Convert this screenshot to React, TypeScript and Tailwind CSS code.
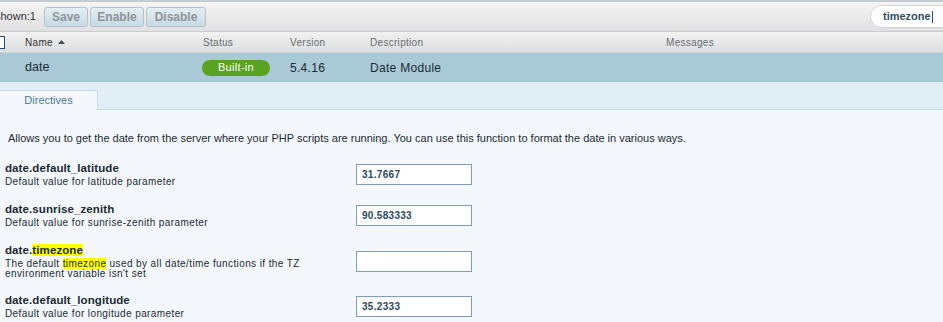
import React from "react";

const font = { fontFamily: '"Liberation Sans", Arial, sans-serif' };

function Directive({
  name,
  desc,
  value,
}: {
  name: React.ReactNode;
  desc: React.ReactNode;
  value: string;
}) {
  return (
    <div className="flex items-center mb-[14px]">
      <div className="w-[356px] shrink-0 pl-[5px]">
        <div className="text-[11.5px] leading-[17px] font-bold text-[#1b2a33] tracking-[0.1px]">{name}</div>
        <div className="text-[10px] leading-[10px] text-[#1b2a33] tracking-[0.4px] w-[330px]">{desc}</div>
      </div>
      <div className="w-[116px] h-[21px] mt-[1px] border border-[#7f9db9] bg-white px-[5px] flex items-center text-[10px] font-bold text-[#2c4a5c] tracking-[0.3px]">
        {value}
      </div>
    </div>
  );
}

const hl = (t: string) => <span className="bg-[#ffff00]">{t}</span>;

export default function App() {
  return (
    <div className="w-[943px] h-[322px] overflow-hidden bg-[#f4f8fc]" style={font}>
      <div className="h-[2px] bg-[#c5ccd1]" />
      {/* toolbar */}
      <div className="h-[30px] bg-gradient-to-b from-[#f5f5f5] to-[#e0e0e0] border-b border-[#c8ced3] flex items-center">
        <span className="text-[11px] text-[#333] ml-[-5px] w-[49px]">shown:1</span>
        <div className="flex gap-[2px]">
          {["Save", "Enable", "Disable"].map((b, i) => (
            <div
              key={b}
              className={`h-[20px] ${i === 0 ? "w-[44px]" : i === 1 ? "w-[54px]" : "w-[60px]"} rounded-[3px] border border-[#b0c2cc] bg-gradient-to-b from-[#e4eef3] to-[#c7dae4] flex items-center justify-center text-[12px] font-bold text-[#8e9599]`}
            >
              {b}
            </div>
          ))}
        </div>
        <div className="flex-1" />
        <div className="w-[80px] h-[23px] mr-[-7px] rounded-l-full bg-white border border-[#d6d6d6] flex items-center pl-[12px] text-[11px] font-bold text-[#2f4f5f]">
          timezone<span className="w-px h-[12px] bg-[#2f4f5f] ml-[1px]" />
        </div>
      </div>
      {/* header */}
      <div className="h-[20px] bg-gradient-to-b from-[#f2f2f2] to-[#dedede] flex items-center text-[10px] text-[#666d72] tracking-[0.3px]">
        <div className="w-[13px] h-[13px] ml-[-8px] border border-[#1f4e7a] bg-white shrink-0" />
        <div className="w-[198px] pl-[20px] flex items-center">
          <span className="text-[#333]">Name</span>
          <svg width="7" height="5" className="ml-[5px]" viewBox="0 0 7 5">
            <path d="M3.5 0 L7 4 L0 4 Z" fill="#3d4f5a" />
          </svg>
        </div>
        <div className="w-[87px]">Status</div>
        <div className="w-[80px]">Version</div>
        <div className="w-[296px]">Description</div>
        <div>Messages</div>
      </div>
      {/* data row */}
      <div className="h-[30px] bg-[#a9c9d6] flex items-center text-[12px] text-[#1a2a33] border-t border-[#c8d8e0]">
        <div className="w-[202px] pl-[25px] text-[12.5px]">date</div>
        <div className="w-[88px]">
          <div className="w-[68px] h-[16px] rounded-full bg-[#5aa21f] text-white text-[11px] flex items-center justify-center tracking-[0.3px]">
            Built-in
          </div>
        </div>
        <div className="w-[80px] tracking-[0.3px]">5.4.16</div>
        <div className="tracking-[0.3px]">Date Module</div>
      </div>
      {/* tabs */}
      <div className="h-[28px] bg-[#e1eef5] flex items-end border-b border-[#c4dce8]">
        <div className="w-[98px] h-[20px] mb-[-1px] bg-[#f4f8fc] border-t border-r border-[#c4dce8] flex items-center justify-center text-[11px] text-[#4a7a90]">
          Directives
        </div>
      </div>
      {/* content */}
      <div className="pt-[21px]">
        <p className="pl-[8px] text-[11px] text-[#1b2a33] leading-[14px] mb-[15px]">
          Allows you to get the date from the server where your PHP scripts are running. You can use this function to format the date in various ways.
        </p>
        <Directive name="date.default_latitude" desc="Default value for latitude parameter" value="31.7667" />
        <Directive name="date.sunrise_zenith" desc="Default value for sunrise-zenith parameter" value="90.583333" />
        <Directive
          name={<>date.{hl("timezone")}</>}
          desc={
            <>
              The default {hl("timezone")} used by all date/time functions if the TZ environment variable isn't set
            </>
          }
          value=""
        />
        <div className="-mt-[1px]">
          <Directive name="date.default_longitude" desc="Default value for longitude parameter" value="35.2333" />
        </div>
      </div>
    </div>
  );
}
